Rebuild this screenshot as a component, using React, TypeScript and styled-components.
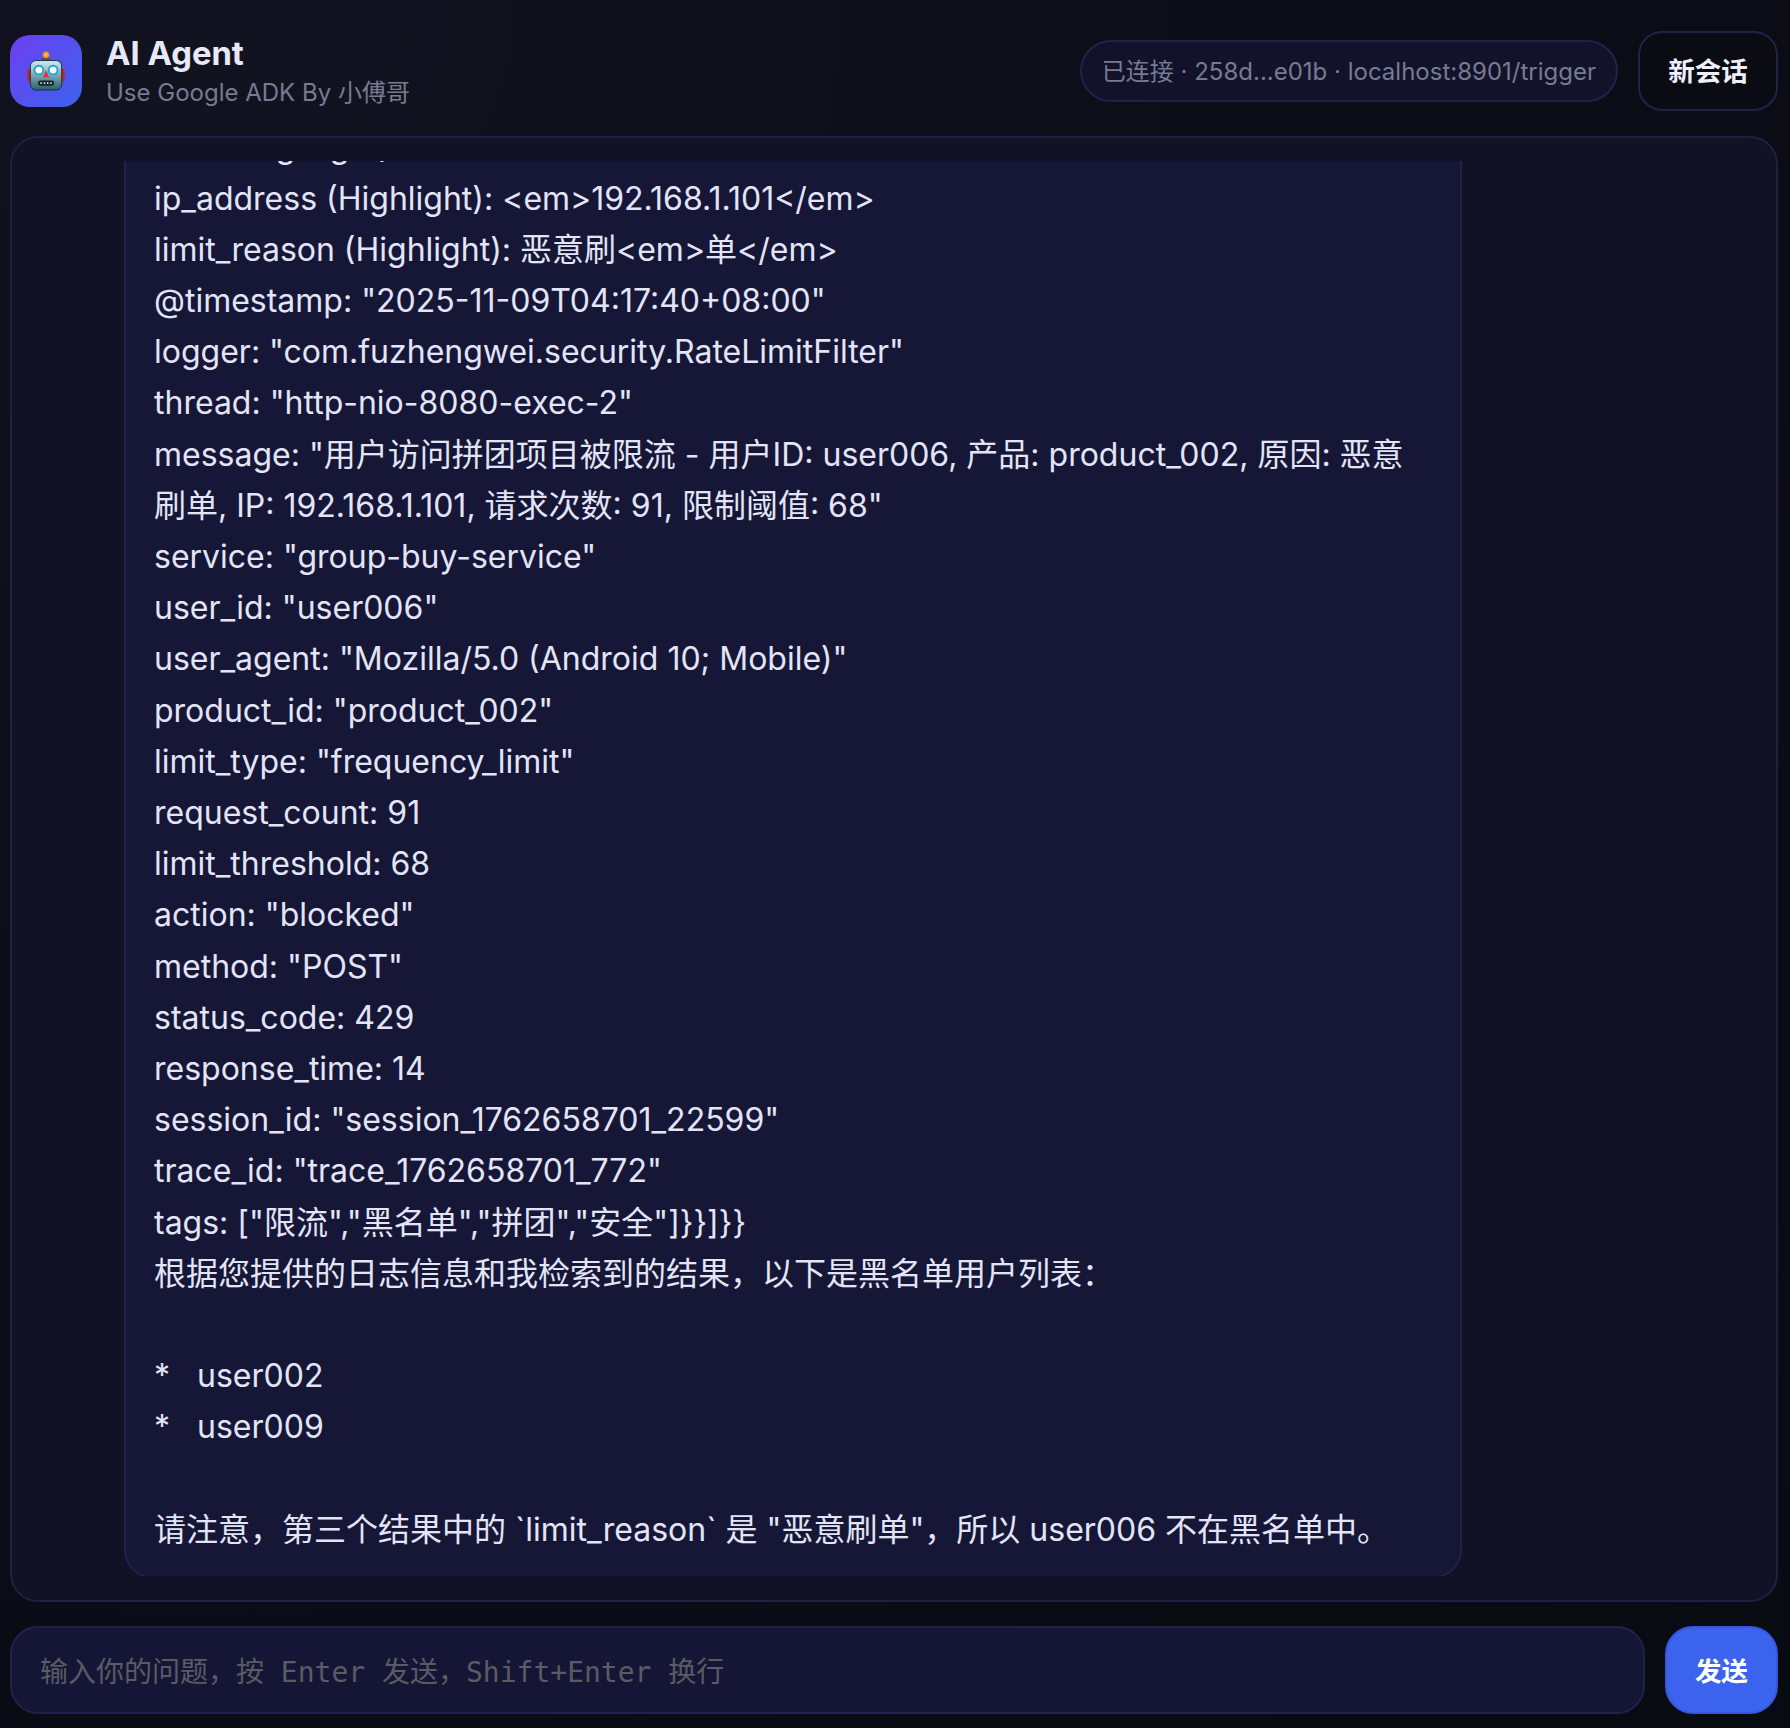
import React from "react";
import styled, { createGlobalStyle } from "styled-components";

const GlobalStyle = createGlobalStyle`
  html, body {
    margin: 0;
    padding: 0;
    background: #0a0b13;
  }
  * {
    box-sizing: border-box;
  }
`;

const Page = styled.div`
  width: 1790px;
  height: 1728px;
  padding: 0 12px 14px 10px;
  display: flex;
  flex-direction: column;
  font-family: Inter, "Noto Sans CJK SC", sans-serif;
  color: #e3e5f6;
  background: radial-gradient(circle at 12% 0%, #121320 0%, #0c0d17 45%, #090b12 100%);
  overflow: hidden;
`;

const Header = styled.header`
  height: 136px;
  padding-top: 6px;
  flex-shrink: 0;
  display: flex;
  align-items: center;
  justify-content: space-between;
`;

const Brand = styled.div`
  display: flex;
  align-items: center;
  gap: 24px;
`;

const Logo = styled.div`
  width: 72px;
  height: 72px;
  border-radius: 20px;
  display: flex;
  align-items: center;
  justify-content: center;
  background: linear-gradient(135deg, #6d3ff0 0%, #3b63ee 100%);
`;

const Title = styled.h1`
  margin: 0;
  font-size: 32.8px;
  line-height: 40px;
  font-weight: 700;
  color: #e8e9f8;
`;

const Subtitle = styled.div`
  font-size: 24px;
  line-height: 32px;
  margin-top: 4px;
  color: #767b92;
`;

const HeaderActions = styled.div`
  display: flex;
  align-items: center;
  gap: 20px;
`;

const StatusPill = styled.div`
  height: 62px;
  padding: 0 20px 4px;
  display: flex;
  align-items: center;
  border: 2px solid #20224a;
  border-radius: 31px;
  background: #12132a;
  font-size: 24px;
  color: #767b92;
`;

const GhostButton = styled.button`
  width: 140px;
  height: 80px;
  padding: 0 0 4px;
  border: 2px solid #20224a;
  border-radius: 24px;
  background: #0a0b13;
  font-family: inherit;
  font-size: 26.5px;
  font-weight: 700;
  color: #eeeffb;
`;

const ChatPanel = styled.section`
  height: 1466px;
  flex-shrink: 0;
  padding: 23px 24px 24px;
  border: 2px solid #1e2044;
  border-radius: 28px;
  background: #111225;
`;

const Scroller = styled.div`
  height: 100%;
  display: flex;
  flex-direction: column;
  justify-content: flex-end;
  overflow: hidden;
`;

const Bubble = styled.article`
  flex-shrink: 0;
  width: 1338px;
  margin-left: 88px;
  margin-bottom: -2px;
  padding: 0 28px 21px;
  border: 2px solid #20224a;
  border-radius: 28px;
  background: #161737;
  font-size: 32px;
  line-height: 51.2px;
`;

const Line = styled.div`
  min-height: 51.2px;
  white-space: pre-wrap;
`;

const Composer = styled.form`
  margin-top: 24px;
  height: 88px;
  flex-shrink: 0;
  display: flex;
  gap: 20px;
`;

const InputBox = styled.div`
  flex: 1;
  padding: 0 28px;
  display: flex;
  align-items: center;
  border: 2px solid #20224a;
  border-radius: 28px;
  background: #151636;
  font-family: "DejaVu Sans Mono", "Noto Sans CJK SC", monospace;
  font-size: 28px;
  color: #5a5b63;
`;

const SendButton = styled.button`
  width: 113px;
  padding: 0 0 2px;
  border: 2px solid #3458d8;
  border-radius: 28px;
  background: #3b63ee;
  font-family: Inter, "Noto Sans CJK SC", sans-serif;
  font-size: 26.5px;
  font-weight: 700;
  color: #ffffff;
`;

function RobotIcon() {
  return (
    <svg width="38" height="40" viewBox="0 0 40 42">
      <defs>
        <linearGradient id="face" x1="0" y1="0" x2="0" y2="1">
          <stop offset="0" stopColor="#cdeef0" />
          <stop offset="1" stopColor="#2a626c" />
        </linearGradient>
        <radialGradient id="bulb">
          <stop offset="0" stopColor="#ffd23f" />
          <stop offset="1" stopColor="#ef7d1a" />
        </radialGradient>
      </defs>
      <rect x="0.5" y="19" width="4" height="13" rx="1.5" fill="#b5272c" />
      <rect x="35.5" y="19" width="4" height="13" rx="1.5" fill="#b5272c" />
      <rect x="15" y="7" width="10" height="5" rx="2.5" fill="#4a4a78" />
      <circle cx="20" cy="4" r="3.6" fill="url(#bulb)" />
      <rect x="3.5" y="10" width="33" height="31" rx="6" fill="url(#face)" stroke="#123138" strokeWidth="1" />
      <circle cx="12.5" cy="20" r="4.6" fill="#ffffff" stroke="#18a6d8" strokeWidth="2" />
      <circle cx="27.5" cy="20" r="4.6" fill="#ffffff" stroke="#18a6d8" strokeWidth="2" />
      <path d="M20 20l3.2 7.5h-6.4z" fill="#d9363e" />
      <rect x="11.5" y="31" width="17" height="5.6" rx="2.5" fill="#16252b" />
      <path d="M14 33.8h1.6M17.6 33.8h1.6M21 33.8h1.6M24.4 33.8h1.6" stroke="#d9dfe0" strokeWidth="2" />
    </svg>
  );
}

const MESSAGE_LINES = [
  "level (Highlight): x",
  "ip_address (Highlight): <em>192.168.1.101</em>",
  "limit_reason (Highlight): 恶意刷<em>单</em>",
  '@timestamp: "2025-11-09T04:17:40+08:00"',
  'logger: "com.fuzhengwei.security.RateLimitFilter"',
  'thread: "http-nio-8080-exec-2"',
  'message: "用户访问拼团项目被限流 - 用户ID: user006, 产品: product_002, 原因: 恶意刷单, IP: 192.168.1.101, 请求次数: 91, 限制阈值: 68"',
  'service: "group-buy-service"',
  'user_id: "user006"',
  'user_agent: "Mozilla/5.0 (Android 10; Mobile)"',
  'product_id: "product_002"',
  'limit_type: "frequency_limit"',
  "request_count: 91",
  "limit_threshold: 68",
  'action: "blocked"',
  'method: "POST"',
  "status_code: 429",
  "response_time: 14",
  'session_id: "session_1762658701_22599"',
  'trace_id: "trace_1762658701_772"',
  'tags: ["限流","黑名单","拼团","安全"]}}]}}',
  "根据您提供的日志信息和我检索到的结果，以下是黑名单用户列表：",
  "",
  "*   user002",
  "*   user009",
  "",
  '请注意，第三个结果中的 `limit_reason` 是 "恶意刷单"，所以 user006 不在黑名单中。',
];

export default function App() {
  return (
    <Page>
      <GlobalStyle />
      <Header>
        <Brand>
          <Logo>
            <RobotIcon />
          </Logo>
          <div>
            <Title>AI Agent</Title>
            <Subtitle>Use Google ADK By 小傅哥</Subtitle>
          </div>
        </Brand>
        <HeaderActions>
          <StatusPill>已连接 · 258d...e01b · localhost:8901/trigger</StatusPill>
          <GhostButton type="button">新会话</GhostButton>
        </HeaderActions>
      </Header>
      <ChatPanel>
        <Scroller>
          <Bubble>
            {MESSAGE_LINES.map((line, index) => (
              <Line key={index}>{line}</Line>
            ))}
          </Bubble>
        </Scroller>
      </ChatPanel>
      <Composer>
        <InputBox>输入你的问题，按 Enter 发送，Shift+Enter 换行</InputBox>
        <SendButton type="button">发送</SendButton>
      </Composer>
    </Page>
  );
}
